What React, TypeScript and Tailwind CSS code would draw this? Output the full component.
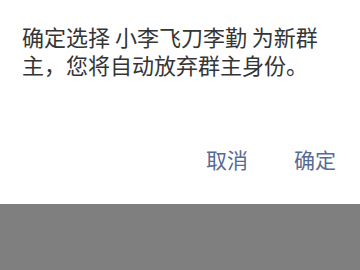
export default function App() {
  return (
    <div
      className="w-[360px] h-[270px] flex flex-col bg-[#7f7f7f]"
      style={{ fontFamily: '"Noto Sans CJK SC", "Noto Sans", sans-serif' }}
    >
      <div className="h-[204px] bg-white flex flex-col">
        <p className="pt-[22px] px-[22px] text-[22px] leading-[28px] text-[#353535]">
          确定选择 小李飞刀李勤 为新群主，您将自动放弃群主身份。
        </p>
        <div className="mt-auto mb-[31px] flex justify-end gap-[46px] pr-[24px] text-[21px] leading-[28px] text-[#576b95]">
          <button>取消</button>
          <button>确定</button>
        </div>
      </div>
    </div>
  );
}
